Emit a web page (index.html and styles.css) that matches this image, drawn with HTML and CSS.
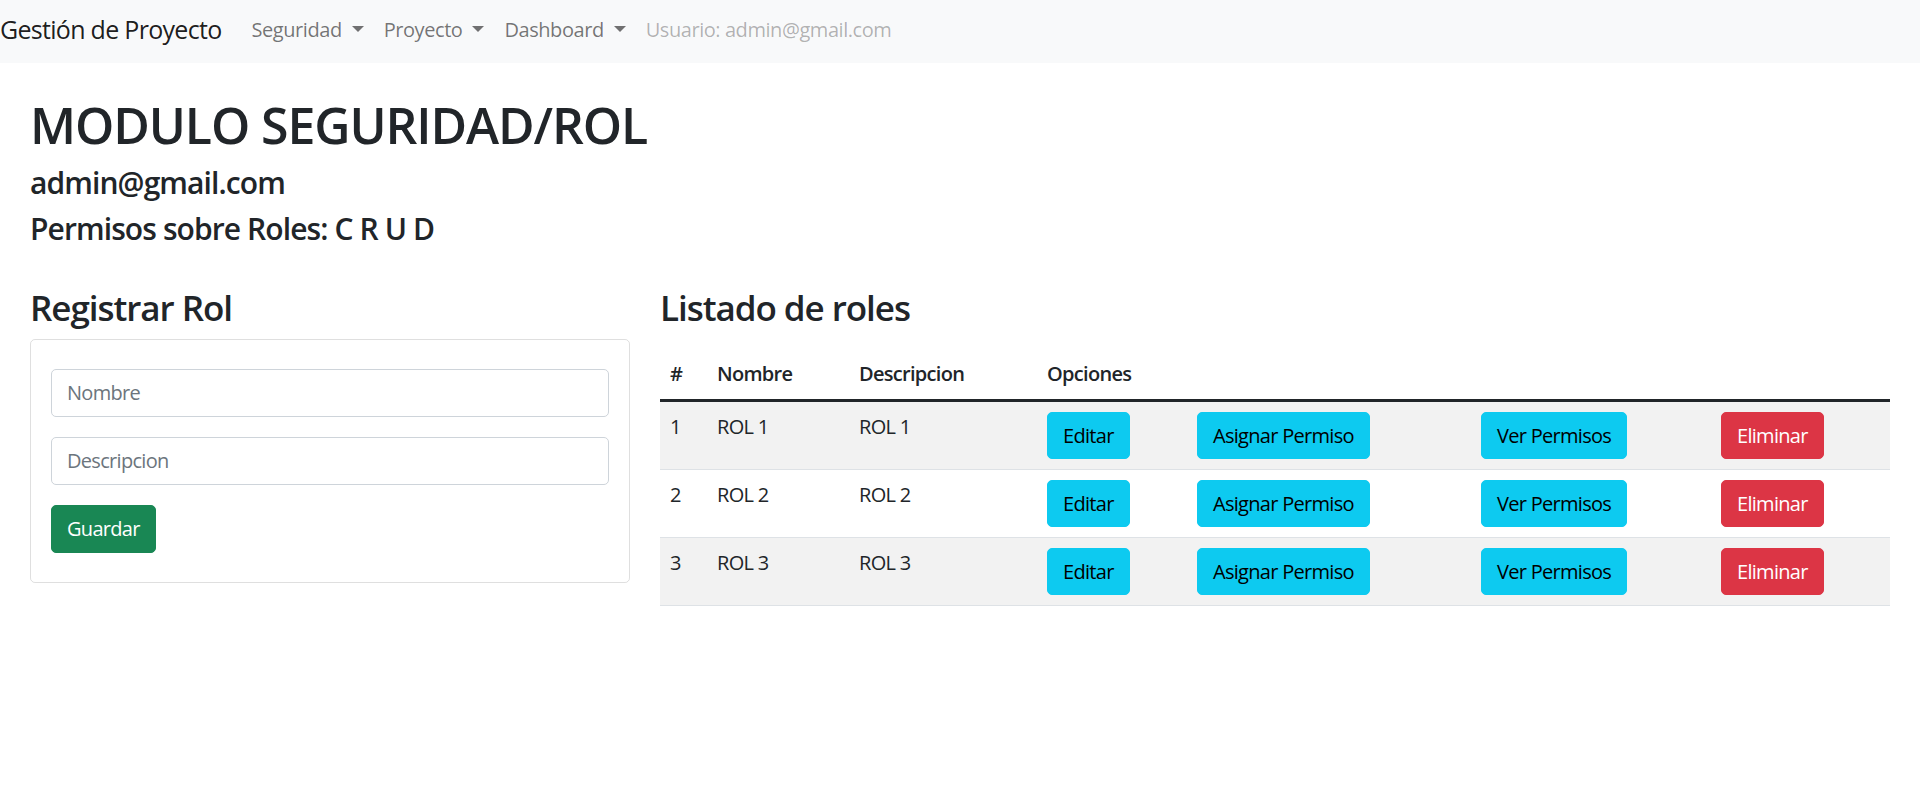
FILE: index.html
```html
<!DOCTYPE html>
<html lang="es">
<head>
<meta charset="utf-8">
<title>Gestión de Proyecto</title>
<link rel="stylesheet" href="styles.css">
</head>
<body>
<nav class="navbar">
  <a class="brand" href="#">Gestión de Proyecto</a>
  <ul class="nav">
    <li><a class="nav-link toggle" href="#">Seguridad</a></li>
    <li><a class="nav-link toggle" href="#">Proyecto</a></li>
    <li><a class="nav-link toggle" href="#">Dashboard</a></li>
    <li><span class="nav-link disabled">Usuario: admin@gmail.com</span></li>
  </ul>
</nav>
<main class="page">
  <header class="page-head">
    <h1 class="title">MODULO SEGURIDAD/ROL</h1>
    <h4 class="subtitle">admin@gmail.com</h4>
    <h4 class="subtitle">Permisos sobre Roles: C R U D</h4>
  </header>
  <div class="row">
    <section class="col col-form">
      <h3 class="section-title">Registrar Rol</h3>
      <div class="card">
        <form class="role-form">
          <input class="form-control" type="text" placeholder="Nombre">
          <input class="form-control" type="text" placeholder="Descripcion">
          <button class="btn btn-success" type="button">Guardar</button>
        </form>
      </div>
    </section>
    <section class="col col-list">
      <h3 class="section-title list-title">Listado de roles</h3>
      <table class="roles">
        <colgroup>
          <col class="c-num"><col class="c-name"><col class="c-desc"><col class="c-edit"><col class="c-assign"><col class="c-view"><col class="c-del">
        </colgroup>
        <thead>
          <tr><th>#</th><th>Nombre</th><th>Descripcion</th><th>Opciones</th><th></th><th></th><th></th></tr>
        </thead>
        <tbody>
          <tr>
            <td>1</td><td>ROL 1</td><td>ROL 1</td>
            <td><button class="btn btn-info" type="button">Editar</button></td>
            <td><button class="btn btn-info" type="button">Asignar Permiso</button></td>
            <td><button class="btn btn-info" type="button">Ver Permisos</button></td>
            <td><button class="btn btn-danger" type="button">Eliminar</button></td>
          </tr>
          <tr>
            <td>2</td><td>ROL 2</td><td>ROL 2</td>
            <td><button class="btn btn-info" type="button">Editar</button></td>
            <td><button class="btn btn-info" type="button">Asignar Permiso</button></td>
            <td><button class="btn btn-info" type="button">Ver Permisos</button></td>
            <td><button class="btn btn-danger" type="button">Eliminar</button></td>
          </tr>
          <tr>
            <td>3</td><td>ROL 3</td><td>ROL 3</td>
            <td><button class="btn btn-info" type="button">Editar</button></td>
            <td><button class="btn btn-info" type="button">Asignar Permiso</button></td>
            <td><button class="btn btn-info" type="button">Ver Permisos</button></td>
            <td><button class="btn btn-danger" type="button">Eliminar</button></td>
          </tr>
        </tbody>
      </table>
    </section>
  </div>
</main>
</body>
</html>
```

FILE: styles.css
```css
html, body {
  margin: 0;
  padding: 0;
}
body {
  font-family: "Open Sans", "Noto Sans", "Liberation Sans", sans-serif;
  font-size: 20px;
  line-height: 1.5;
  letter-spacing: -0.035em;
  color: #212529;
  background: #fff;
}

/* Navbar */
.navbar {
  box-sizing: border-box;
  height: 63px;
  padding-bottom: 3px;
  background: #f8f9fa;
  display: flex;
  align-items: center;
}
.brand {
  font-size: 25px;
  line-height: 1.5;
  letter-spacing: -0.028em;
  color: rgba(0, 0, 0, 0.9);
  text-decoration: none;
  margin-right: 20px;
  white-space: nowrap;
}
.nav {
  display: flex;
  list-style: none;
  margin: 0;
  padding: 0;
}
.nav-link {
  display: block;
  padding: 10px;
  letter-spacing: -0.022em;
  color: rgba(0, 0, 0, 0.55);
  text-decoration: none;
  white-space: nowrap;
}
.toggle::after {
  content: "";
  display: inline-block;
  margin-left: 10px;
  vertical-align: 0.255em;
  border-top: 0.3em solid;
  border-right: 0.3em solid transparent;
  border-left: 0.3em solid transparent;
  border-bottom: 0;
}
.disabled {
  color: rgba(0, 0, 0, 0.3);
}

/* Page */
.page {
  padding: 0 15px;
}
.page-head {
  padding: 0 15px;
}
.title,
.subtitle,
.section-title {
  font-weight: 600;
  line-height: 1.2;
  margin: 0 0 10px;
  letter-spacing: -0.03em;
}
.title {
  font-size: 50px;
  margin-top: 32px;
  letter-spacing: -0.022em;
}
.subtitle {
  font-size: 30px;
}
.row {
  display: flex;
  margin-top: 40px;
}
.col {
  padding: 0 15px;
  box-sizing: border-box;
}
.col-form {
  flex: 0 0 33.3333%;
}
.col-list {
  flex: 0 0 66.6667%;
}
.section-title {
  font-size: 35px;
}
.list-title {
  margin-bottom: 20px;
}

/* Card + form */
.card {
  border: 1px solid rgba(0, 0, 0, 0.125);
  border-radius: 5px;
  padding: 29px 20px;
}
.role-form {
  margin: 0;
}
.form-control {
  display: block;
  width: 100%;
  box-sizing: border-box;
  font: inherit;
  letter-spacing: inherit;
  line-height: 30px;
  padding: 8px 15px;
  margin: 0 0 20px;
  color: #212529;
  background: #fff;
  border: 1px solid #ced4da;
  border-radius: 5px;
  outline: none;
}
.form-control::placeholder {
  color: #6c757d;
  opacity: 1;
}

/* Buttons */
.btn {
  display: inline-block;
  font: inherit;
  letter-spacing: inherit;
  line-height: 30px;
  padding: 7.5px 15px;
  border: 1px solid transparent;
  border-radius: 5px;
  white-space: nowrap;
  cursor: pointer;
}
.btn-success {
  padding: 8px 15px;
  background: #198754;
  border-color: #198754;
  color: #fff;
}
.btn-info {
  background: #0dcaf0;
  border-color: #0dcaf0;
  color: #000;
}
.btn-danger {
  background: #dc3545;
  border-color: #dc3545;
  color: #fff;
}

/* Table */
.roles {
  width: 100%;
  border-collapse: collapse;
  table-layout: fixed;
}
.c-num { width: 47px; }
.c-name { width: 142px; }
.c-desc { width: 188px; }
.c-edit { width: 150px; }
.c-assign { width: 284px; }
.c-view { width: 240px; }
.c-del { width: 179px; }
.roles th,
.roles td {
  padding: 10px;
  text-align: left;
  vertical-align: top;
  border-bottom: 1px solid #dee2e6;
}
.roles thead th {
  font-weight: 600;
  border-bottom: 3px solid #212529;
}
.roles tbody tr:nth-child(odd) td {
  background: #f2f2f2;
}
```
